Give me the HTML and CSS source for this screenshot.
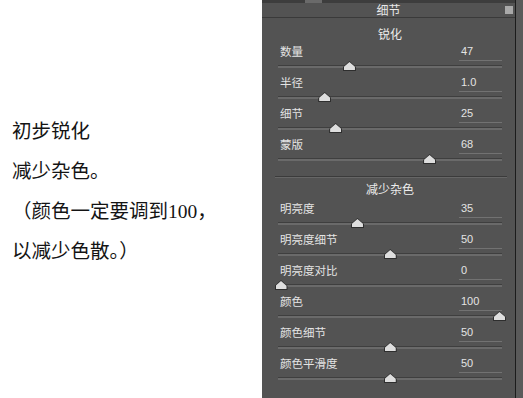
FILE: index.html
```html
<!DOCTYPE html>
<html lang="zh">
<head>
<meta charset="utf-8">
<title>细节</title>
<link rel="stylesheet" href="styles.css">
</head>
<body>
<div class="page">
  <div class="notes">
    <p>初步锐化</p>
    <p>减少杂色。</p>
    <p>（颜色一定要调到100，</p>
    <p>以减少色散。）</p>
  </div>
  <div class="panel">
    <div class="tabbar"><span class="tab"></span></div>
    <div class="header"><span></span><span class="title">细节</span><span class="menu"></span></div>
    <div class="body">
      <div class="section-title first">锐化</div>
      <div class="row">
        <div class="row-top"><span class="label">数量</span><span class="value">47</span></div>
        <div class="track"><div class="range"><span class="thumb" style="left:31.33%"></span></div></div>
      </div>
      <div class="row">
        <div class="row-top"><span class="label">半径</span><span class="value">1.0</span></div>
        <div class="track"><div class="range"><span class="thumb" style="left:20%"></span></div></div>
      </div>
      <div class="row">
        <div class="row-top"><span class="label">细节</span><span class="value">25</span></div>
        <div class="track"><div class="range"><span class="thumb" style="left:25%"></span></div></div>
      </div>
      <div class="row">
        <div class="row-top"><span class="label">蒙版</span><span class="value">68</span></div>
        <div class="track"><div class="range"><span class="thumb" style="left:68%"></span></div></div>
      </div>
      <div class="sep"></div>
      <div class="section-title second">减少杂色</div>
      <div class="row">
        <div class="row-top"><span class="label">明亮度</span><span class="value">35</span></div>
        <div class="track"><div class="range"><span class="thumb" style="left:35%"></span></div></div>
      </div>
      <div class="row">
        <div class="row-top"><span class="label">明亮度细节</span><span class="value">50</span></div>
        <div class="track"><div class="range"><span class="thumb" style="left:50%"></span></div></div>
      </div>
      <div class="row">
        <div class="row-top"><span class="label">明亮度对比</span><span class="value">0</span></div>
        <div class="track"><div class="range"><span class="thumb" style="left:0%"></span></div></div>
      </div>
      <div class="row">
        <div class="row-top"><span class="label">颜色</span><span class="value">100</span></div>
        <div class="track"><div class="range"><span class="thumb" style="left:100%"></span></div></div>
      </div>
      <div class="row">
        <div class="row-top"><span class="label">颜色细节</span><span class="value">50</span></div>
        <div class="track"><div class="range"><span class="thumb" style="left:50%"></span></div></div>
      </div>
      <div class="row">
        <div class="row-top"><span class="label">颜色平滑度</span><span class="value">50</span></div>
        <div class="track"><div class="range"><span class="thumb" style="left:50%"></span></div></div>
      </div>
    </div>
  </div>
  <div class="edge"></div>
</div>
</body>
</html>
```

FILE: styles.css
```css
html, body {
  margin: 0;
  padding: 0;
  background: #ffffff;
}

.page {
  display: flex;
  width: 523px;
  height: 398px;
  overflow: hidden;
}

.notes {
  flex: none;
  width: 262px;
  box-sizing: border-box;
  padding: 112px 0 0 12px;
  font-family: "Liberation Serif", "Noto Sans CJK SC", serif;
  font-size: 19.5px;
  line-height: 40px;
  font-weight: 400;
  color: #141414;
}

.notes p {
  margin: 0;
  white-space: nowrap;
}

.panel {
  flex: none;
  width: 254px;
  box-sizing: border-box;
  background: #535353;
  border-right: 1px solid #1c1c1c;
  display: flex;
  flex-direction: column;
  font-family: "Noto Sans CJK SC", "Liberation Sans", sans-serif;
  color: #e4e4e4;
}

.edge {
  flex: 1;
  background: #5a5a5a;
}

.tabbar {
  height: 3px;
  background: #3d3d3d;
  display: flex;
}

.tab {
  margin-left: 43px;
  width: 17px;
  background: #6a6a6a;
}

.header {
  height: 14px;
  border-bottom: 1px solid #3a3a3a;
  display: grid;
  grid-template-columns: 1fr auto 1fr;
  align-items: center;
  font-size: 12px;
  line-height: 14px;
  color: #e8e8e8;
}

.menu {
  justify-self: end;
  width: 8px;
  height: 8px;
  margin-right: 2px;
  background: #a9a9a9;
}

.body {
  padding: 0 13px 0 16px;
}

.section-title {
  text-align: center;
  font-size: 12px;
  line-height: 16px;
  color: #ececec;
}

.section-title.first {
  padding: 8px 0 1px;
}

.section-title.second {
  padding: 3px 0 3px;
}

.sep {
  margin: 9px -5px 0 -3px;
  height: 1px;
  background: #3b3b3b;
  border-bottom: 1px solid #666666;
}

.row {
  height: 31px;
}

.row-top {
  height: 19px;
  display: flex;
  justify-content: space-between;
  align-items: flex-start;
}

.label {
  padding-left: 2px;
  font-size: 11.5px;
  line-height: 16px;
}

.value {
  width: 43px;
  height: 18px;
  box-sizing: border-box;
  padding-left: 2px;
  font-family: "Liberation Sans", sans-serif;
  font-size: 11px;
  line-height: 16px;
  border-bottom: 1px solid #727272;
}

.track {
  height: 2px;
  margin-top: 3px;
  padding: 0 2.5px 0 3px;
  background: #6a6a6a;
  border-top: 1px solid #3f3f3f;
}

.range {
  position: relative;
  height: 100%;
}

.thumb {
  position: absolute;
  top: -5px;
  width: 13px;
  height: 10px;
  margin-left: -6.5px;
  background: #2e2e2e;
  clip-path: polygon(50% 0, 100% 60%, 100% 100%, 0 100%, 0 60%);
}

.thumb::after {
  content: "";
  position: absolute;
  left: 1px;
  right: 1px;
  top: 1px;
  bottom: 1px;
  background: #dedede;
  clip-path: polygon(50% 0, 100% 60%, 100% 100%, 0 100%, 0 60%);
}
```
